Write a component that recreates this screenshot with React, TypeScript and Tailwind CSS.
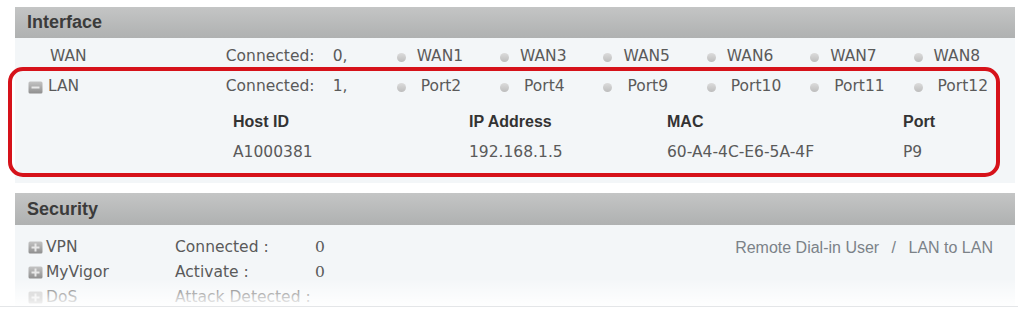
const wans = ["WAN1", "WAN3", "WAN5", "WAN6", "WAN7", "WAN8"];
const ports = ["Port2", "Port4", "Port9", "Port10", "Port11", "Port12"];

const BoxIcon = ({ plus = false }: { plus?: boolean }) => (
  <svg width="15" height="13" viewBox="0 0 15 13">
    <defs>
      <linearGradient id={plus ? "gp" : "gm"} x1="0" y1="0" x2="0" y2="1">
        <stop offset="0" stopColor="#c4c4c4" />
        <stop offset="1" stopColor="#8f8f8f" />
      </linearGradient>
    </defs>
    <rect x="0.5" y="0.5" width="14" height="12" rx="1.5" fill={`url(#${plus ? "gp" : "gm"})`} />
    <rect x="3.5" y="5.5" width="8" height="2" fill="#e8e8e8" />
    {plus && <rect x="6.5" y="2.5" width="2" height="8" fill="#e8e8e8" />}
  </svg>
);

const Dot = () => (
  <span className="block h-[9px] w-[9px] shrink-0 rounded-full bg-gradient-to-b from-[#dcdcdc] to-[#bdbdbd]" />
);

const Header = ({ title, h }: { title: string; h: string }) => (
  <div
    className={`flex items-center bg-gradient-to-b from-[#c4c5c5] to-[#afb1b1] pl-[12px] font-['Liberation_Sans',sans-serif] text-[18px] font-semibold text-[#3b3b3b] ${h}`}
  >
    {title}
  </div>
);

const StatusRow = ({
  icon,
  label,
  value,
  items,
  gap,
}: {
  icon: boolean;
  label: string;
  value: string;
  items: string[];
  gap: string;
}) => (
  <div className="flex h-[30px] items-center">
    <div className="flex w-[211px] items-center gap-[5px] pl-[13px]">
      <span className="flex w-[15px] justify-center">{icon && <BoxIcon />}</span>
      <span className={icon ? "" : "pl-[2px]"}>{label}</span>
    </div>
    <div className="w-[107px]">Connected:</div>
    <div className="w-[62px]">{value}</div>
    {items.map((it) => (
      <div key={it} className="flex w-[103.5px] items-center">
        <span className="ml-[2px]">
          <Dot />
        </span>
        <span className={gap}>{it}</span>
      </div>
    ))}
  </div>
);

const SecRow = ({
  label,
  status,
  value,
  extra,
}: {
  label: string;
  status: string;
  value: string;
  extra?: boolean;
}) => (
  <div className="flex h-[25px] items-center">
    <div className="flex w-[160px] items-center gap-[3px] pl-[13px]">
      <span className="flex w-[15px] justify-center">
        <BoxIcon plus />
      </span>
      <span>{label}</span>
    </div>
    <div className="w-[140px]">{status}</div>
    <div className="font-['DejaVu_Serif',serif]">{value}</div>
    {extra && (
      <div className="ml-auto pr-[22px] font-['Liberation_Sans',sans-serif] text-[16px] text-[#7b8288]">
        Remote Dial-in User <span className="mx-[8px]">/</span> LAN to LAN
      </div>
    )}
  </div>
);

export default function App() {
  return (
    <div className="relative h-[318px] w-[1018px] overflow-hidden bg-white font-['DejaVu_Sans',sans-serif] text-[15.5px] text-[#5a5a5a]">
      <div className="pl-[15px] pr-[3px] pt-[7px]">
        {/* Interface */}
        <Header title="Interface" h="h-[31px]" />
        <div className="bg-[#f3f6f8] pb-[15px] pt-[4px]">
          <StatusRow icon={false} label="WAN" value="0," items={wans} gap="ml-[11px]" />
          <StatusRow icon label="LAN" value="1," items={ports} gap="ml-[15px]" />
          <div className="mt-[4px] flex h-[32px] items-center pl-[218px] font-['Liberation_Sans',sans-serif] text-[16px] font-bold text-[#333]">
            <div className="w-[236px]">Host ID</div>
            <div className="w-[198px]">IP Address</div>
            <div className="w-[236px]">MAC</div>
            <div>Port</div>
          </div>
          <div className="flex h-[30px] items-center pl-[218px]">
            <div className="w-[236px]">A1000381</div>
            <div className="w-[198px]">192.168.1.5</div>
            <div className="w-[236px]">60-A4-4C-E6-5A-4F</div>
            <div>P9</div>
          </div>
        </div>

        {/* Security */}
        <div className="mt-[10px]">
          <Header title="Security" h="h-[32px]" />
          <div className="h-[120px] bg-[#f3f6f8] pt-[10px]">
            <SecRow label="VPN" status="Connected :" value="0" extra />
            <SecRow label="MyVigor" status="Activate :" value="0" />
            <SecRow label="DoS" status="Attack Detected :" value="" />
          </div>
        </div>
      </div>

      {/* bottom fade of the cropped screenshot */}
      <div className="pointer-events-none absolute left-0 right-0 top-[280px] h-[26px] bg-gradient-to-b from-white/10 to-white/95" />
      <div className="pointer-events-none absolute bottom-0 left-0 right-0 top-[306px] border-t border-[#e4e6e8] bg-white" />

      {/* red highlight around LAN */}
      <div className="pointer-events-none absolute left-[8px] top-[67px] h-[110px] w-[992px] rounded-[15px] border-[4px] border-[#d6121a]" />
    </div>
  );
}
